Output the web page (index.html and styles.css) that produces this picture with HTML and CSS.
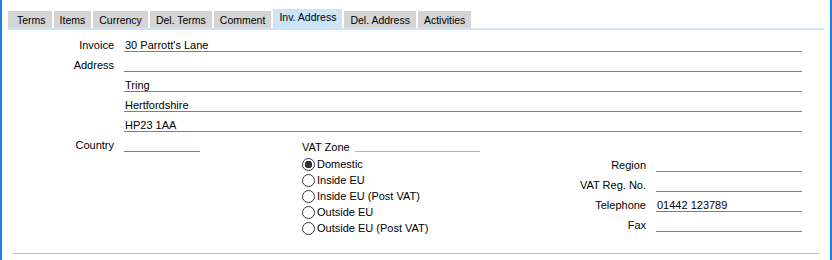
FILE: index.html
```html
<!DOCTYPE html>
<html lang="en">
<head>
  <meta charset="UTF-8" />
  <meta name="viewport" content="width=device-width, initial-scale=1.0"/>
  <title>Invoice Address</title>
  <link rel="stylesheet" href="styles.css">
</head>
<body>
  <div class="window">
    <div class="tabs">
      <div class="tab">Terms</div>
      <div class="tab">Items</div>
      <div class="tab">Currency</div>
      <div class="tab">Del. Terms</div>
      <div class="tab">Comment</div>
      <div class="tab active">Inv. Address</div>
      <div class="tab">Del. Address</div>
      <div class="tab">Activities</div>
    </div>

    <div class="address">
      <div class="row"><span class="label">Invoice</span><div class="field">30 Parrott's Lane</div></div>
      <div class="row"><span class="label">Address</span><div class="field"></div></div>
      <div class="row"><span class="label"></span><div class="field">Tring</div></div>
      <div class="row"><span class="label"></span><div class="field">Hertfordshire</div></div>
      <div class="row"><span class="label"></span><div class="field">HP23 1AA</div></div>
    </div>

    <div class="lower">
      <div class="country">
        <div class="row"><span class="label">Country</span><div class="field"></div></div>
      </div>

      <div class="vat-zone">
        <div class="group-head"><span class="group-title">VAT Zone</span><span class="group-line"></span></div>
        <div class="radio checked">Domestic</div>
        <div class="radio">Inside EU</div>
        <div class="radio">Inside EU (Post VAT)</div>
        <div class="radio">Outside EU</div>
        <div class="radio">Outside EU (Post VAT)</div>
      </div>

      <div class="contact">
        <div class="row"><span class="label">Region</span><div class="field"></div></div>
        <div class="row"><span class="label">VAT Reg. No.</span><div class="field"></div></div>
        <div class="row"><span class="label">Telephone</span><div class="field">01442 123789</div></div>
        <div class="row"><span class="label">Fax</span><div class="field"></div></div>
      </div>
    </div>

    <div class="footer-line"></div>
  </div>
</body>
</html>
```

FILE: styles.css
```css
:root {
  --frame-color: #1c83d6;
  --tab-color: #d5d5d5;
  --tab-active: #cce4f7;
  --line-color: #808080;
  --text-color: #000000;
}

body {
  margin: 0;
  font-family: 'Liberation Sans', Arial, sans-serif;
  font-size: 11px;
  color: var(--text-color);
  background: #ffffff;
}

.window {
  width: 832px;
  height: 260px;
  box-sizing: border-box;
  border-left: 2px solid var(--frame-color);
  border-right: 2px solid var(--frame-color);
  overflow: hidden;
}

/* tab strip */
.tabs {
  display: flex;
  align-items: flex-end;
  gap: 2px;
  margin: 0 6px;
  padding-top: 9px;
  border-bottom: 2px solid var(--tab-active);
}

.tab {
  height: 17px;
  line-height: 17px;
  padding: 1px 6px 0;
  box-sizing: border-box;
  background: var(--tab-color);
  font-size: 10.5px;
  white-space: nowrap;
}

.tab:first-child {
  padding-left: 9px;
}

.tab.active {
  height: 19px;
  padding-top: 0;
  padding-bottom: 2px;
  background: var(--tab-active);
}

/* field rows */
.row {
  display: grid;
  grid-template-columns: 112px 678px;
  column-gap: 10px;
  height: 20px;
}

.label {
  align-self: end;
  text-align: right;
  line-height: 12px;
  padding-bottom: 1px;
  white-space: nowrap;
}

.field {
  display: flex;
  align-items: flex-end;
  box-sizing: border-box;
  border-bottom: 1px solid var(--line-color);
  line-height: 12px;
  padding-left: 1px;
  white-space: nowrap;
}

.address {
  margin-top: 2px;
}

.lower {
  display: flex;
}

.country {
  width: 300px;
}

.country .row {
  grid-template-columns: 112px 76px;
}

/* VAT zone radio group */
.vat-zone {
  width: 178px;
}

.group-head {
  display: flex;
  align-items: flex-end;
  height: 20px;
}

.group-title {
  line-height: 12px;
  margin-bottom: -1px;
}

.group-line {
  flex: 1;
  margin-left: 5px;
  border-bottom: 1px solid #b4b4b4;
}

.radio {
  display: flex;
  align-items: center;
  gap: 2px;
  height: 16px;
  line-height: 12px;
  white-space: nowrap;
}

.group-head + .radio {
  margin-top: 4px;
}

.radio::before {
  content: "";
  width: 13px;
  height: 13px;
  box-sizing: border-box;
  border: 1px solid #333333;
  border-radius: 50%;
  background: #ffffff;
}

.radio.checked::before {
  background: radial-gradient(circle, #333333 0 3.5px, #ffffff 4px);
}

.contact {
  padding-top: 20px;
}

.contact .row {
  grid-template-columns: 166px 146px;
}

.footer-line {
  margin: 17px 11px 0;
  border-top: 1px solid #b9b9b9;
}
```
